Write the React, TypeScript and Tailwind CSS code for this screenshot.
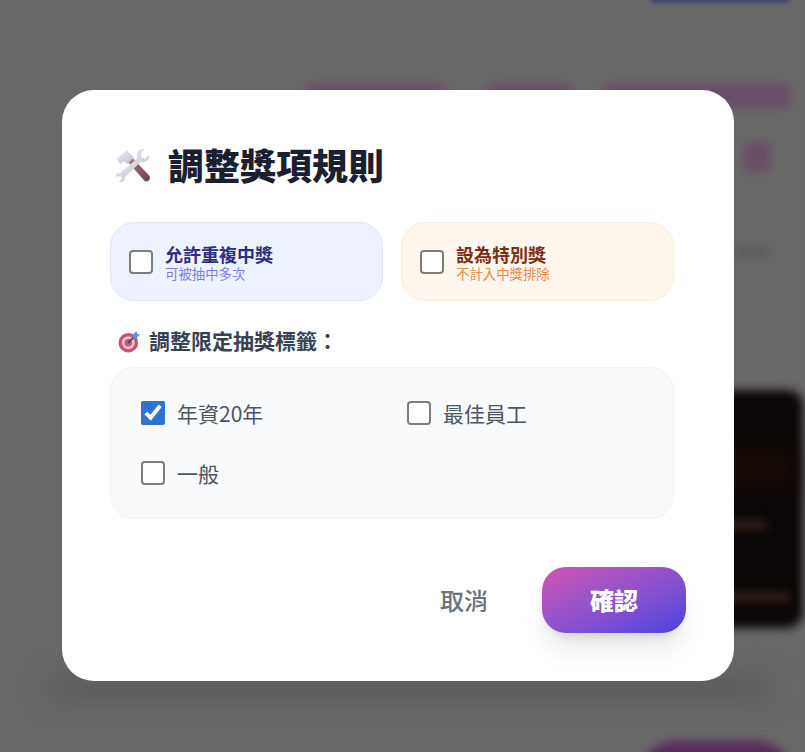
import { useState } from 'react';

const FONT = "font-['Noto_Sans_CJK_TC','Noto_Sans',sans-serif]";

// Hammer and wrench emoji
function ToolsIcon() {
  return (
    <svg width="38" height="38" viewBox="0 0 40 40" className="shrink-0">
      <defs>
        <linearGradient id="handle" x1="0" y1="0" x2="1" y2="1">
          <stop offset="0" stopColor="#a87a74" />
          <stop offset="1" stopColor="#6e3f55" />
        </linearGradient>
        <linearGradient id="steel" x1="0" y1="0" x2="1" y2="1">
          <stop offset="0" stopColor="#f1edf5" />
          <stop offset="1" stopColor="#c4bccf" />
        </linearGradient>
      </defs>
      {/* hammer handle */}
      <path d="M14 15 L19 11 L37 30 C38.5 32 38 34 36.5 35.3 C35 36.6 33 36.6 31.6 35 Z" fill="url(#handle)" />
      {/* hammer head */}
      <path d="M3 12.5 L13.5 3.5 L21 11 L14.5 17.5 L10.5 15 L6.5 18 Z" fill="url(#steel)" />
      {/* wrench */}
      <path d="M26.5 3.5 C24 6 23.5 9 24.7 11.6 L6.4 27.7 C3.2 27 1.6 29 2 31.5 L6.5 30.6 L8.5 33 L5.6 36.4 C9 37.8 12 35.4 11.5 31.8 L28.3 15.5 C32 16.5 35.3 15 36.6 11.5 C37 10.4 37 9.4 36.9 8.5 L32.4 12.4 L28.6 10.4 L28.6 6.4 L32.4 3 C30.6 2.2 28.4 2.2 26.5 3.5 Z" fill="url(#steel)" />
    </svg>
  );
}

// Direct hit emoji
function TargetIcon() {
  return (
    <svg width="23" height="23" viewBox="0 0 24 24" className="shrink-0">
      <circle cx="10.8" cy="13.2" r="10.2" fill="#c4557a" />
      <circle cx="10.8" cy="13.2" r="6.8" fill="#efbccb" />
      <circle cx="10.8" cy="13.2" r="3.8" fill="#c4557a" />
      <path d="M10.8 13.2 L19 4.8" stroke="#44505f" strokeWidth="1.6" strokeLinecap="round" />
      <path d="M15.2 5 L19.2 1 L20 4 L23 4.8 L19 8.8 L15.8 8.2 Z" fill="#4d9be0" />
    </svg>
  );
}

function OptionCard({ title, sub, className, titleClass, subClass }: {
  title: string;
  sub: string;
  className: string;
  titleClass: string;
  subClass: string;
}) {
  return (
    <label className={`flex items-center gap-3 rounded-3xl border h-[79px] px-[18px] ${className}`}>
      <input type="checkbox" className="m-0 h-6 w-6 appearance-none rounded-[4px] border-2 border-[#7d7d7d] bg-white" />
      <span className="flex flex-col">
        <span className={`text-lg font-bold leading-[22px] ${titleClass}`}>{title}</span>
        <span className={`text-[13.4px] leading-[16px] ${subClass}`}>{sub}</span>
      </span>
    </label>
  );
}

function TagCheckbox({ label, checked, onChange }: { label: string; checked: boolean; onChange: () => void }) {
  return (
    <label className="flex h-7 items-center gap-3 text-[21px] text-[#4b5563]">
      <input
        type="checkbox"
        checked={checked}
        onChange={onChange}
        className={checked
          ? 'm-0 h-6 w-6 accent-[#2f73d2]'
          : 'm-0 h-6 w-6 appearance-none rounded-[4px] border-2 border-[#7d7d7d] bg-white'}
      />
      <span className="mt-[1px]">{label}</span>
    </label>
  );
}

export default function App() {
  const [tags, setTags] = useState<Record<string, boolean>>({ '年資20年': true, '最佳員工': false, '一般': false });
  const toggle = (name: string) => setTags((t) => ({ ...t, [name]: !t[name] }));

  return (
    <div className={`relative h-[752px] w-[805px] overflow-hidden bg-[#686868] ${FONT}`}>
      {/* blurred page behind the dialog */}
      <div className="absolute left-[650px] top-[-6px] h-[9px] w-[140px] rounded-md bg-[#3f4470] blur-[2px]" />
      <div className="absolute left-[305px] top-[84px] h-[24px] w-[140px] bg-[#6a4e66] blur-[5px]" />
      <div className="absolute left-[487px] top-[84px] h-[24px] w-[84px] bg-[#6a4e66] blur-[5px]" />
      <div className="absolute left-[603px] top-[84px] h-[24px] w-[187px] bg-[#6a4e66] blur-[5px]" />
      <div className="absolute left-[744px] top-[142px] h-[30px] w-[26px] bg-[#6a4e66] blur-[5px]" />
      <div className="absolute left-[734px] top-[248px] h-[10px] w-[36px] bg-[#5c5c5c] blur-[4px]" />
      {/* dark card */}
      <div className="absolute left-[700px] top-[390px] h-[238px] w-[103px] rounded-2xl bg-[#0b0706] blur-[5px]" />
      <div className="absolute left-[720px] top-[447px] h-[42px] w-[74px] bg-[#170c07] blur-[8px]" />
      <div className="absolute left-[720px] top-[520px] h-[10px] w-[47px] bg-[#2e1f18] blur-[4px]" />
      <div className="absolute left-[720px] top-[592px] h-[10px] w-[70px] bg-[#2e1f18] blur-[4px]" />
      <div className="absolute left-[50px] top-[676px] h-[24px] w-[720px] bg-[#5a5a5a] blur-[14px]" />
      <div className="absolute left-[640px] top-[741px] h-[70px] w-[152px] rounded-full bg-[#5a2c5a] blur-[5px]" />

      {/* dialog */}
      <div className="relative ml-[62px] mt-[90px] flex h-[591px] w-[672px] flex-col rounded-[32px] bg-white p-12">
        <div className="flex-1 pr-3">
          <h2 className="flex h-[56px] items-center gap-4 pl-1 text-[36px] font-black leading-none text-[#1a2030]">
            <ToolsIcon />
            <span className="mb-1">調整獎項規則</span>
          </h2>

          <div className="mt-[28px] grid grid-cols-2 gap-[18px]">
            <OptionCard
              title="允許重複中獎"
              sub="可被抽中多次"
              className="bg-[#eef2ff] border-[#e0e7ff]"
              titleClass="text-[#312e81]"
              subClass="text-[#7a7fe0]"
            />
            <OptionCard
              title="設為特別獎"
              sub="不計入中獎排除"
              className="bg-[#fff7ed] border-[#fbeedd]"
              titleClass="text-[#7c2d12]"
              subClass="text-[#e8854a]"
            />
          </div>

          <div className="mt-[25px] mb-[11px] flex h-[30px] items-center gap-[8px] pl-[8px] text-[21px] font-bold text-[#374151]">
            <TargetIcon />
            <span>調整限定抽獎標籤：</span>
          </div>

          <div className="grid h-[152px] grid-cols-2 content-start gap-x-[30px] gap-y-8 rounded-3xl border border-[#f3f4f6] bg-[#f9fafb] px-[30px] pt-[31px]">
            {Object.keys(tags).map((name) => (
              <TagCheckbox key={name} label={name} checked={tags[name]} onChange={() => toggle(name)} />
            ))}
          </div>
        </div>

        <div className="flex items-center justify-end gap-2">
          <button className="h-[66px] px-[46px] text-2xl font-medium text-[#6b7280]">取消</button>
          <button className="h-[66px] w-[144px] rounded-3xl bg-gradient-to-br from-[#d152b4] to-[#4a40e0] text-2xl font-black text-white shadow-xl">
            確認
          </button>
        </div>
      </div>
    </div>
  );
}
